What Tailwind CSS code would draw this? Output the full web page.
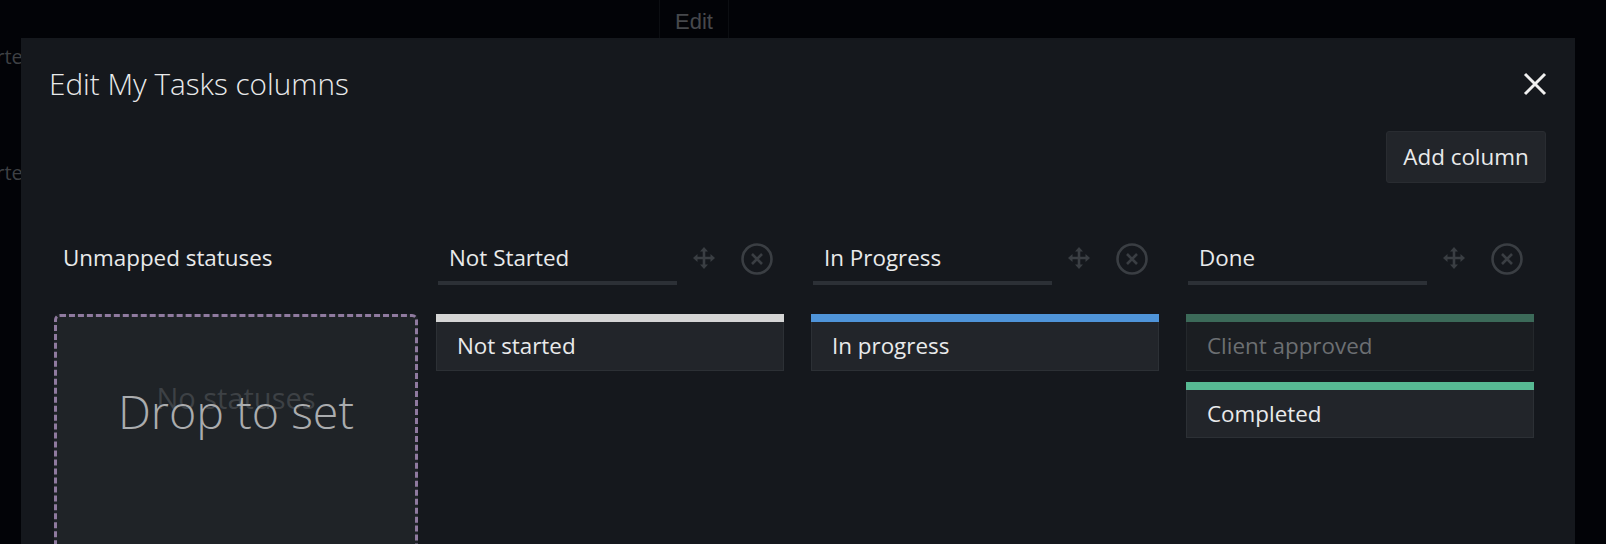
<!DOCTYPE html>
<html lang="en">
<head>
    <meta charset="UTF-8">
    <title>Edit My Tasks columns</title>
    <script src="https://cdn.jsdelivr.net/npm/@tailwindcss/browser@4"></script>
</head>
<body class="relative h-[544px] w-[1606px] overflow-hidden bg-[#020307] font-['Open_Sans',sans-serif]">

    <!-- Page behind the modal -->
    <div class="flex h-[38px] w-full">
        <div class="ml-[659px] flex h-full w-[70px] items-center justify-center border-x border-[#0c0e12] pt-[4px] font-['Liberation_Sans',sans-serif] text-[22px] text-[#46484c]">Edit</div>
    </div>
    <span class="absolute left-[-33px] top-[42px] text-[20px] text-[#3e4044]">Starte</span>
    <span class="absolute left-[-33px] top-[158px] text-[20px] text-[#3e4044]">Starte</span>

    <!-- Modal -->
    <div class="absolute bottom-0 left-[21px] right-[31px] top-[38px] overflow-hidden bg-[#15181d]">
        <div class="flex h-[93px] items-start justify-between pl-[28px] pr-[28px] pt-[23px]">
            <h1 class="text-[29.7px] font-light leading-[46px] text-[#e9eaeb]">Edit My Tasks columns</h1>
            <svg class="mt-[11px] h-[24px] w-[24px]" viewBox="0 0 24 24" fill="none" stroke="#f0f0f0" stroke-width="3">
                <path d="M2 2l20 20M22 2L2 22"/>
            </svg>
        </div>

        <div class="flex justify-end pr-[29px]">
            <button class="h-[52px] w-[160px] rounded-[3px] border border-[#292c31] bg-[#22252a] pb-[1px] text-[22.4px] text-[#e9eaeb]">Add column</button>
        </div>

        <div class="mt-[48px] flex pl-[33px]">
            <!-- Unmapped -->
            <div class="w-[364px]">
                <div class="flex h-[54px] items-center pl-[9px] text-[22.4px] text-[#e9eaeb]">Unmapped statuses</div>
                <div class="relative mt-[29px] h-[300px] rounded-[6px] border-[3px] border-dashed border-[#8f7a9f] bg-[#1f2327]">
                    <p class="pt-[59px] text-center text-[29px] text-[#3d4145]">No statuses</p>
                    <p class="absolute inset-x-0 top-[60px] text-center text-[46.6px] font-light text-[#aaacae]">Drop to set</p>
                </div>
            </div>

            <!-- Columns -->
            <div class="ml-[18px] grid grid-cols-3 gap-x-[27px]">
                <div class="w-[348px]">
                    <div class="flex h-[54px] items-start">
                        <div class="ml-[2px] h-[54px] w-[239px] border-b-4 border-[#2c3036] pl-[11px] pt-[10px] text-[22.4px] text-[#e9eaeb]">Not Started</div>
                        <svg class="ml-[16px] mt-[16px] h-[22px] w-[22px]" viewBox="0 0 22 22" fill="#3a3e43"><path d="M11 0l4 4.5h-2.7v5.2h5.200V7l4.500 4-4.500 4v-2.700h-5.200v5.200H15L11 22l-4-4.500h2.700v-5.200H4.500V15L0 11l4.500-4v2.700h5.200V4.500H7z"/></svg>
                        <svg class="ml-[26px] mt-[12px] h-[32px] w-[32px]" viewBox="0 0 32 32" fill="none" stroke="#3a3e43" stroke-width="2.600"><circle cx="16" cy="16" r="14.500"/><path d="M11 11l10 10M21 11L11 21"/></svg>
                    </div>
                    <div class="mt-[29px] flex h-[57px] flex-col">
                        <div class="h-[8px] bg-[#d5d5d5]"></div>
                        <div class="flex flex-1 items-center border border-t-0 border-[#2c3035] bg-[#22252a] pl-[20px] text-[22.4px] text-[#e9eaeb]">Not started</div>
                    </div>
                </div>

                <div class="w-[348px]">
                    <div class="flex h-[54px] items-start">
                        <div class="ml-[2px] h-[54px] w-[239px] border-b-4 border-[#2c3036] pl-[11px] pt-[10px] text-[22.4px] text-[#e9eaeb]">In Progress</div>
                        <svg class="ml-[16px] mt-[16px] h-[22px] w-[22px]" viewBox="0 0 22 22" fill="#3a3e43"><path d="M11 0l4 4.5h-2.7v5.2h5.200V7l4.500 4-4.500 4v-2.700h-5.200v5.200H15L11 22l-4-4.500h2.700v-5.200H4.500V15L0 11l4.500-4v2.700h5.200V4.500H7z"/></svg>
                        <svg class="ml-[26px] mt-[12px] h-[32px] w-[32px]" viewBox="0 0 32 32" fill="none" stroke="#3a3e43" stroke-width="2.600"><circle cx="16" cy="16" r="14.500"/><path d="M11 11l10 10M21 11L11 21"/></svg>
                    </div>
                    <div class="mt-[29px] flex h-[57px] flex-col">
                        <div class="h-[8px] bg-[#4f94d9]"></div>
                        <div class="flex flex-1 items-center border border-t-0 border-[#2c3035] bg-[#22252a] pl-[20px] text-[22.4px] text-[#e9eaeb]">In progress</div>
                    </div>
                </div>

                <div class="w-[348px]">
                    <div class="flex h-[54px] items-start">
                        <div class="ml-[2px] h-[54px] w-[239px] border-b-4 border-[#2c3036] pl-[11px] pt-[10px] text-[22.4px] text-[#e9eaeb]">Done</div>
                        <svg class="ml-[16px] mt-[16px] h-[22px] w-[22px]" viewBox="0 0 22 22" fill="#3a3e43"><path d="M11 0l4 4.5h-2.7v5.2h5.200V7l4.500 4-4.500 4v-2.700h-5.200v5.200H15L11 22l-4-4.500h2.700v-5.200H4.500V15L0 11l4.500-4v2.700h5.200V4.500H7z"/></svg>
                        <svg class="ml-[26px] mt-[12px] h-[32px] w-[32px]" viewBox="0 0 32 32" fill="none" stroke="#3a3e43" stroke-width="2.600"><circle cx="16" cy="16" r="14.500"/><path d="M11 11l10 10M21 11L11 21"/></svg>
                    </div>
                    <div class="mt-[29px] flex h-[57px] flex-col">
                        <div class="h-[8px] bg-[#3c6a59]"></div>
                        <div class="flex flex-1 items-center border border-t-0 border-[#24282c] bg-[#1b1e22] pl-[20px] text-[22.4px] text-[#6c6f72]">Client approved</div>
                    </div>
                    <div class="mt-[11px] flex h-[56px] flex-col">
                        <div class="h-[8px] bg-[#57b993]"></div>
                        <div class="flex flex-1 items-center border border-t-0 border-[#2c3035] bg-[#22252a] pl-[20px] text-[22.4px] text-[#e9eaeb]">Completed</div>
                    </div>
                </div>
            </div>
        </div>
    </div>
</body>
</html>
